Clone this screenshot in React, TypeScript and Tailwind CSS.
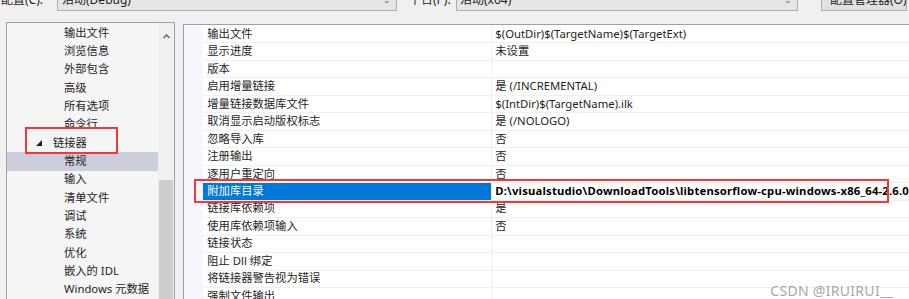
import React from "react";

const navItems = [
  "输出文件",
  "浏览信息",
  "外部包含",
  "高级",
  "所有选项",
  "命令行",
];

const linkerItems = [
  "常规",
  "输入",
  "清单文件",
  "调试",
  "系统",
  "优化",
  "嵌入的 IDL",
  "Windows 元数据",
];

const props: [string, string][] = [
  ["输出文件", "$(OutDir)$(TargetName)$(TargetExt)"],
  ["显示进度", "未设置"],
  ["版本", ""],
  ["启用增量链接", "是 (/INCREMENTAL)"],
  ["增量链接数据库文件", "$(IntDir)$(TargetName).ilk"],
  ["取消显示启动版权标志", "是 (/NOLOGO)"],
  ["忽略导入库", "否"],
  ["注册输出", "否"],
  ["逐用户重定向", "否"],
  ["附加库目录", "D:\\visualstudio\\DownloadTools\\libtensorflow-cpu-windows-x86_64-2.6.0"],
  ["链接库依赖项", "是"],
  ["使用库依赖项输入", "否"],
  ["链接状态", ""],
  ["阻止 Dll 绑定", ""],
  ["将链接器警告视为错误", ""],
  ["强制文件输出", ""],
];

const Chevron = () => (
  <svg width="9" height="9" viewBox="0 0 9 9" fill="none">
    <path d="M1.5 6L4.5 3L7.5 6" stroke="#606060" strokeWidth="1.4" />
  </svg>
);

const App = () => {
  return (
    <div
      className="relative w-[909px] h-[299px] overflow-hidden bg-[#f0f0f0] text-[11.3px] text-[#1e1e1e]"
      style={{ fontFamily: '"Noto Sans", "Noto Sans CJK SC", sans-serif' }}
    >
      {/* top toolbar, scrolled off the top */}
      <div className="flex items-center h-[22px] -mt-[11px] text-[12px]">
        <span className="w-[57px] pl-[1px]">配置(C):</span>
        <div className="flex items-center justify-between w-[340px] h-[22px] bg-[#e5e5e5] border border-[#adadad] pl-[4px] pr-[5px]">
          <span>活动(Debug)</span>
          <span className="text-[#606060] text-[9px]">⌄</span>
        </div>
        <span className="w-[59px] pl-[12px]">平台(P):</span>
        <div className="flex items-center justify-between w-[342px] h-[22px] bg-[#e5e5e5] border border-[#adadad] pl-[3px] pr-[5px]">
          <span>活动(x64)</span>
          <span className="text-[#606060] text-[9px]">⌄</span>
        </div>
        <div className="ml-[23px] w-[86px] h-[22px] bg-[#e1e1e1] border border-[#adadad] flex items-center pl-[8px] whitespace-nowrap overflow-hidden">
          配置管理器(O)...
        </div>
      </div>

      <div className="flex pt-[11px] pl-[6px] h-[288px]">
        {/* left tree */}
        <div className="relative flex w-[171px] h-[290px] border-t border-l border-r border-[#a0a0a0] bg-[#f5f5f5]">
          <div className="flex-1 pt-[1px]">
            {navItems.map((t) => (
              <div key={t} className="h-[18.33px] flex items-center pl-[57px]">
                {t}
              </div>
            ))}
            <div className="h-[18.33px] flex items-center pl-[29px]">
              <svg width="6" height="6" viewBox="0 0 6 6">
                <path d="M6 0V6H0Z" fill="#1e1e1e" />
              </svg>
              <span className="ml-[11px]">链接器</span>
            </div>
            {linkerItems.map((t, i) => (
              <div
                key={t}
                className={`h-[18.33px] flex items-center pl-[57px] ${i === 0 ? "bg-[#cccedb]" : ""}`}
              >
                {t}
              </div>
            ))}
          </div>
          {/* scrollbar */}
          <div className="w-[16px] flex flex-col bg-[#f0f0f0]">
            <div className="h-[20px] flex items-end justify-center pb-[2px]">
              <Chevron />
            </div>
            <div className="h-[137px]" />
            <div className="flex-1 mx-[1px] bg-[#cdcdcd]" />
          </div>
          <div className="absolute left-[18px] top-[104px] w-[93px] h-[27px] border-2 border-[#f03a3a]" />
        </div>

        {/* property grid */}
        <div className="relative ml-[8px] mt-[2px] flex-1 border-t border-l border-[#a0a0a0] bg-white flex">
          <div className="w-[19px] bg-[#f5f7fc]" />
          <div className="flex-1 pt-[1px]">
            {props.map(([name, value], i) => {
              const sel = i === 9;
              return (
                <div key={name} className="flex h-[17.47px] border-b border-[#f0f0f0]">
                  <div
                    className={`w-[288px] flex items-center pl-[4px] whitespace-nowrap ${sel ? "bg-[#0078d7] text-white" : ""}`}
                  >
                    {name}
                  </div>
                  <div
                    className={`flex-1 flex items-center pl-[3px] border-l border-[#f0f0f0] whitespace-nowrap overflow-hidden ${sel ? "font-bold text-black tracking-[0.18px]" : ""}`}
                  >
                    {value}
                  </div>
                </div>
              );
            })}
          </div>
          <div className="absolute left-[10px] top-[154px] w-[695px] h-[24px] border-2 border-[#f03a3a]" />
          <div className="absolute right-[16px] top-[255px] text-[14px] text-[#a8a8a8] tracking-[0.3px]">
            CSDN @IRUIRUI__
          </div>
        </div>
      </div>
    </div>
  );
};

export default App;
